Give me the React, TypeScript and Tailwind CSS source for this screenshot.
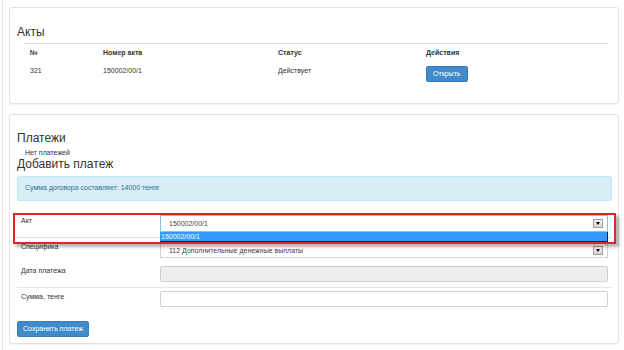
import React from "react";

function Arrow() {
  return (
    <div className="w-[10px] h-[9px] border border-[#a0a0a0] bg-gradient-to-b from-[#f4f4f4] to-[#d6d6d6] flex items-center justify-center">
      <div className="w-0 h-0 border-l-[2.5px] border-r-[2.5px] border-t-[3px] border-l-transparent border-r-transparent border-t-black" />
    </div>
  );
}

export default function App() {
  return (
    <div className="relative w-[624px] h-[350px] bg-white overflow-hidden flex font-['Liberation_Sans',Arial,sans-serif] text-[#333]">
      <div className="w-[2px] shrink-0" />
      <div className="w-px shrink-0 bg-[#e4e4e4]" />
      <div className="pl-[6px] pt-[7px] flex flex-col gap-[10px] w-[616px]">
        {/* Card 1 */}
        <div className="w-[610px] h-[97px] border border-[#e2e2e2] rounded-[3px] shadow-[0_1px_1px_rgba(0,0,0,0.05)] pt-[18px] px-[7px]">
          <h3 className="text-[12px] leading-[13px]">Акты</h3>
          <div className="mt-[4px] ml-[7px] mr-[3px] border-t border-[#e0e0e0]">
            <div className="ml-[2px] grid grid-cols-[73px_175px_148px_1fr] text-[7px] leading-[10px]">
              <div className="pl-[4px] py-[4px] font-bold">№</div>
              <div className="pl-[4px] py-[4px] font-bold">Номер акта</div>
              <div className="pl-[4px] py-[4px] font-bold">Статус</div>
              <div className="pl-[4px] py-[4px] font-bold">Действия</div>
              <div className="pl-[4px] py-[4px]">321</div>
              <div className="pl-[4px] py-[4px]">150002/00/1</div>
              <div className="pl-[4px] py-[4px]">Действует</div>
              <div className="pl-[4px] py-[4px]">
                <button className="h-[16px] px-[6px] bg-[#428bca] border border-[#357ebd] rounded-[2px] text-white text-[7px] leading-[10px]">
                  Открыть
                </button>
              </div>
            </div>
          </div>
        </div>

        {/* Card 2 */}
        <div className="w-[610px] h-[230px] border border-[#e2e2e2] rounded-[3px] shadow-[0_1px_1px_rgba(0,0,0,0.05)] pt-[17px] pl-[7px] pr-[6px]">
          <h3 className="text-[12px] leading-[13px]">Платежи</h3>
          <div className="mt-[3px] ml-[8px] text-[7px] leading-[10px]">Нет платежей</div>
          <h3 className="text-[12px] leading-[13px]">Добавить платеж</h3>
          <div className="mt-[5px] h-[25px] border border-[#bce8f1] bg-[#d9edf7] rounded-[2px] text-[#31708f] text-[7px] pl-[7px] flex items-center">
            Сумма договора составляет: 14000 тенге
          </div>

          <div className="mt-[11px] text-[7px] leading-[10px]">
            {/* row 1 */}
            <div className="h-[25px] flex">
              <div className="w-[143px] pl-[4px] pt-[4px]">Акт</div>
              <div className="flex-1 pr-[4px] pt-[3px] relative">
                <div className="h-[17px] border border-[#8cc0ea] bg-white flex items-center justify-between pl-[8px] pr-[4px] text-[#444]">
                  <span>150002/00/1</span>
                  <Arrow />
                </div>
                <div className="absolute left-0 right-[4px] top-[20px] h-[10px] bg-[#3399ff] border-r border-b border-[#222] text-white pl-[1px] flex items-center z-10">
                  150002/00/1
                </div>
              </div>
            </div>
            {/* row 2 */}
            <div className="h-[25px] flex border-t border-[#dedede]">
              <div className="w-[143px] pl-[4px] pt-[4px]">Специфика</div>
              <div className="flex-1 pr-[4px] pt-[5px]">
                <div className="h-[15px] border border-[#d4d4d4] bg-white flex items-center justify-between pl-[8px] pr-[4px] text-[#444]">
                  <span>112 Дополнительные денежные выплаты</span>
                  <Arrow />
                </div>
              </div>
            </div>
            {/* row 3 */}
            <div className="h-[25px] flex">
              <div className="w-[143px] pl-[4px] pt-[4px]">Дата платежа</div>
              <div className="flex-1 pr-[4px] pt-[4px]">
                <div className="h-[16px] border border-[#d0d0d0] bg-[#eeeeee] rounded-[2px]" />
              </div>
            </div>
            {/* row 4 */}
            <div className="h-[25px] flex border-t border-[#e4e4e4]">
              <div className="w-[143px] pl-[4px] pt-[4px]">Сумма, тенге</div>
              <div className="flex-1 pr-[4px] pt-[3px]">
                <div className="h-[16px] border border-[#d0d0d0] bg-white rounded-[2px]" />
              </div>
            </div>
          </div>

          <button className="mt-[9px] h-[16px] w-[72px] bg-[#428bca] border border-[#357ebd] rounded-[2px] text-white text-[7px] leading-[10px]">
            Сохранить платеж
          </button>
        </div>
      </div>

      {/* red annotation box */}
      <div className="absolute left-[13px] top-[213px] w-[603px] h-[31px] border-2 border-[#d42a2a] shadow-[3px_3px_3px_rgba(0,0,0,0.3)] pointer-events-none z-20" />
    </div>
  );
}
